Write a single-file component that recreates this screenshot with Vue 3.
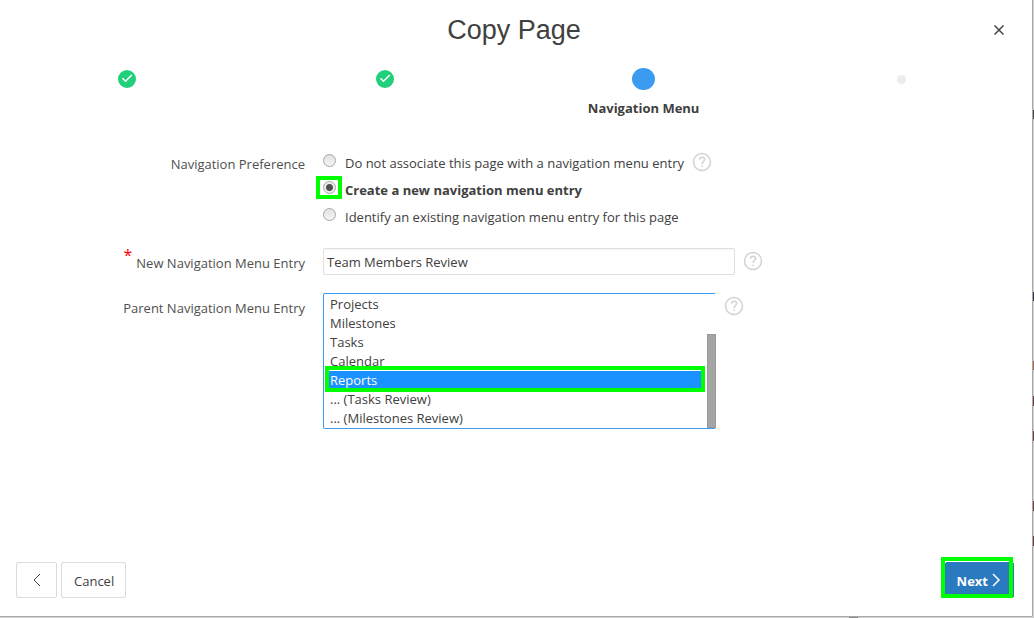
<script setup>
import { ref } from 'vue'

const steps = [
  { state: 'done' },
  { state: 'done' },
  { state: 'current', label: 'Navigation Menu' },
  { state: 'future' }
]

const preferences = [
  { value: 'none', label: 'Do not associate this page with a navigation menu entry' },
  { value: 'create', label: 'Create a new navigation menu entry' },
  { value: 'existing', label: 'Identify an existing navigation menu entry for this page' }
]
const preference = ref('create')

const entryName = ref('Team Members Review')

const parents = ['Projects', 'Milestones', 'Tasks', 'Calendar', 'Reports', '... (Tasks Review)', '... (Milestones Review)']
const parent = ref('Reports')
</script>

<template>
  <div class="backdrop">
    <main class="dialog" role="dialog" aria-labelledby="dialog-title">
      <header class="header">
        <h1 id="dialog-title">Copy Page</h1>
        <button class="close" type="button" aria-label="Close">
          <svg width="10" height="10" viewBox="0 0 10 10"><path d="M0.5 0.5L9.5 9.5M9.5 0.5L0.5 9.5" /></svg>
        </button>
      </header>

      <ol class="steps">
        <li v-for="(step, i) in steps" :key="i" class="step">
          <span class="marker-slot">
            <span class="marker" :class="step.state">
              <svg v-if="step.state === 'done'" width="18" height="18" viewBox="0 0 18 18">
                <path d="M4.5 8.3L7.5 11.3L13.8 5" />
              </svg>
            </span>
          </span>
          <span v-if="step.label" class="step-label">{{ step.label }}</span>
        </li>
      </ol>

      <form class="form" @submit.prevent>
        <span id="pref-label" class="label pref-label">Navigation Preference</span>
        <div class="field">
          <div class="radios" role="radiogroup" aria-labelledby="pref-label">
            <label v-for="p in preferences" :key="p.value" class="choice" :class="{ chosen: preference === p.value }">
              <span class="radio-wrap">
                <input v-model="preference" type="radio" name="preference" :value="p.value" />
                <span v-if="preference === p.value" class="mark mark-radio"></span>
              </span>
              <span>{{ p.label }}</span>
            </label>
          </div>
          <button class="help help-pref" type="button" aria-label="Help">
            <svg width="20" height="20" viewBox="0 0 20 20">
              <circle cx="10" cy="10" r="8.5" />
              <path d="M7.5 7.7C7.5 6.2 8.5 5.3 10 5.3S12.6 6.2 12.6 7.6C12.6 9.5 10 9.6 10 12.1M10 13.6V15" />
            </svg>
          </button>
        </div>

        <label class="label" for="entry-name"><span class="required">*</span>New Navigation Menu Entry</label>
        <div class="field">
          <input id="entry-name" v-model="entryName" class="text" type="text" />
          <button class="help" type="button" aria-label="Help">
            <svg width="20" height="20" viewBox="0 0 20 20">
              <circle cx="10" cy="10" r="8.5" />
              <path d="M7.5 7.7C7.5 6.2 8.5 5.3 10 5.3S12.6 6.2 12.6 7.6C12.6 9.5 10 9.6 10 12.1M10 13.6V15" />
            </svg>
          </button>
        </div>

        <label class="label" for="parent-entry">Parent Navigation Menu Entry</label>
        <div class="field">
          <div class="list-wrap">
            <select id="parent-entry" v-model="parent" class="list" size="7">
              <option v-for="item in parents" :key="item" :value="item">{{ item }}</option>
            </select>
            <span class="mark mark-option"></span>
            <span class="thumb"></span>
          </div>
          <button class="help" type="button" aria-label="Help">
            <svg width="20" height="20" viewBox="0 0 20 20">
              <circle cx="10" cy="10" r="8.5" />
              <path d="M7.5 7.7C7.5 6.2 8.5 5.3 10 5.3S12.6 6.2 12.6 7.6C12.6 9.5 10 9.6 10 12.1M10 13.6V15" />
            </svg>
          </button>
        </div>
      </form>

      <footer class="footer">
        <button class="btn back" type="button" aria-label="Previous">
          <svg width="8" height="14" viewBox="0 0 8 14"><path d="M7 1L1 7L7 13" /></svg>
        </button>
        <button class="btn" type="button">Cancel</button>
        <span class="next-wrap">
          <button class="btn next" type="button">
            Next
            <svg width="8" height="14" viewBox="0 0 8 14"><path d="M1 1L7 7L1 13" /></svg>
          </button>
          <span class="mark mark-next"></span>
        </span>
      </footer>
    </main>
  </div>
</template>

<style>
body {
  margin: 0;
  background: #d2d2d2;
}
</style>

<style scoped>
* {
  box-sizing: border-box;
}

.backdrop {
  min-height: 100vh;
  display: flex;
  padding: 0 1px 1px 0;
  background:
    linear-gradient(#444, #444) 100% 110px / 1px 9px no-repeat,
    linear-gradient(#334, #334) 100% 292px / 1px 9px no-repeat,
    linear-gradient(#a06a48, #a06a48) 100% 361px / 1px 9px no-repeat,
    linear-gradient(#6e3b44, #6e3b44) 100% 396px / 1px 10px no-repeat,
    linear-gradient(#6e3b44, #6e3b44) 100% 431px / 1px 10px no-repeat,
    linear-gradient(#6e3b44, #6e3b44) 100% 501px / 1px 10px no-repeat,
    linear-gradient(#6e3b44, #6e3b44) 100% 536px / 1px 10px no-repeat,
    linear-gradient(#888, #888) 849px 100% / 9px 1px no-repeat,
    #d2d2d2;
  color: #404040;
  font-family: "Open Sans", "Noto Sans", sans-serif;
  font-size: 13px;
  line-height: 20px;
}

.dialog {
  flex: 1;
  display: flex;
  flex-direction: column;
  min-width: 0;
  background: #fff;
  border-right: 1px solid #a8a8a8;
  border-bottom: 1px solid #a8a8a8;
  border-bottom-right-radius: 2px;
}

button {
  padding: 0;
  border: 0;
  background: none;
  color: inherit;
  font: inherit;
}

svg {
  display: block;
  fill: none;
  stroke: currentColor;
}

.header {
  position: relative;
  height: 60px;
  padding-right: 4px;
  text-align: center;
}

h1 {
  margin: 0;
  font: 400 27px/60px "Liberation Sans", Arial, sans-serif;
}

.close {
  position: absolute;
  top: 20px;
  right: 23px;
  padding: 5px;
  color: #444;
}

.close svg {
  stroke-width: 1.5;
}

.steps {
  display: grid;
  grid-template-columns: repeat(4, 1fr);
  margin: 0 0 0 -2px;
  padding: 7px 1px 0 0;
  list-style: none;
}

.step {
  display: flex;
  flex-direction: column;
  align-items: center;
  height: 52px;
}

.marker-slot {
  display: flex;
  align-items: center;
  height: 24px;
}

.marker {
  border-radius: 50%;
}

.done {
  width: 18px;
  height: 18px;
  background: #22cf7b;
  color: #fff;
}

.done svg {
  stroke-width: 1.5;
}

.current {
  width: 23px;
  height: 22px;
  background: #3a9bf0;
}

.future {
  width: 9px;
  height: 9px;
  background: #ececec;
}

.step-label {
  margin-top: 7px;
  font-weight: 700;
}

.form {
  display: grid;
  grid-template-columns: 305px 1fr;
  gap: 18px;
  align-items: start;
  padding-top: 34px;
}

.label {
  padding-top: 5px;
  text-align: right;
  color: #505050;
}

.pref-label {
  padding-top: 1px;
}

.required {
  margin-right: 4px;
  color: #f00;
  font-size: 16px;
  line-height: 0;
  vertical-align: 7px;
}

.field {
  display: flex;
  align-items: flex-start;
  gap: 8px;
}

.radios {
  height: 77px;
}

.choice {
  display: flex;
  gap: 9px;
  height: 27px;
}

.chosen {
  font-weight: 700;
}

.radio-wrap {
  position: relative;
  width: 13px;
  height: 13px;
  margin-top: 1px;
}

.radio-wrap input {
  display: block;
  width: 13px;
  height: 13px;
  margin: 0;
  appearance: none;
  border: 1px solid #a6a6a6;
  border-radius: 50%;
  background: linear-gradient(#e2e2e2, #f4f4f4);
}

.radio-wrap input:checked {
  background: radial-gradient(circle, #505050 3px, #ececec 4px);
}

.mark {
  position: absolute;
  border: 4px solid #0f0;
  pointer-events: none;
}

.mark-radio {
  inset: -5px -6px -5px -7px;
}

.help {
  margin-top: 3px;
  color: #d2d2d2;
}

.help svg {
  stroke-width: 1.5;
}

.help-pref {
  margin-top: -1px;
}

.text {
  width: 412px;
  height: 27px;
  padding: 0 3px;
  border: 1px solid #dfdfdf;
  border-radius: 2px;
  background: linear-gradient(#f8f8f8, #fff 3px);
  color: #404040;
  font: inherit;
}

.list-wrap {
  position: relative;
  width: 393px;
}

.list {
  display: block;
  width: 100%;
  height: 136px;
  padding: 1px 12px 0 2px;
  border: 1px solid #3a9bf0;
  border-right-color: transparent;
  border-radius: 2px;
  background: #fff;
  color: #404040;
  font: inherit;
  outline: 0;
  overflow: hidden;
  scrollbar-width: none;
}

.list option {
  min-height: 19px;
  height: 19px;
  padding: 0 4px;
  line-height: 19px;
}

.list option:checked {
  background: #1a92ff linear-gradient(#1a92ff, #1a92ff);
  color: #fff;
}

.mark-option {
  top: 73px;
  right: 11px;
  left: 2px;
  height: 26px;
}

.thumb {
  position: absolute;
  right: 0;
  bottom: 1px;
  width: 9px;
  height: 94px;
  border: 1px solid #999;
  background: #a5a5a5;
}

.footer {
  display: flex;
  gap: 4px;
  margin-top: auto;
  padding: 0 18px 18px 16px;
}

.btn {
  height: 36px;
  padding: 2px 11px 0 12px;
  border: 1px solid #dcdcdc;
  border-radius: 2px;
  background: #fff;
}

.back {
  padding: 0 15px 0 16px;
}

.next-wrap {
  position: relative;
  margin-left: auto;
}

.next {
  display: flex;
  align-items: center;
  gap: 4px;
  padding: 2px 13px 0 11px;
  border-color: #2b7abf;
  background: #2b7abf;
  color: #fff;
  font-weight: 700;
}

.next svg {
  margin-bottom: 2px;
  stroke-width: 1.5;
}

.mark-next {
  inset: -5px 1px 0 -4px;
}
</style>
